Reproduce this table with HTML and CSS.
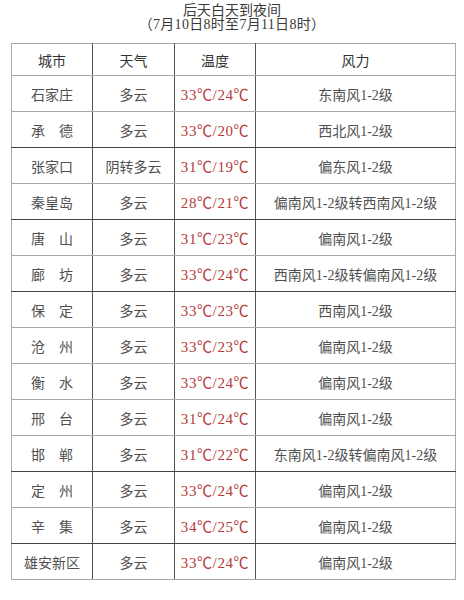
FILE: index.html
```html
<!DOCTYPE html>
<html lang="zh">
<head>
<meta charset="utf-8">
<link rel="stylesheet" href="styles.css">
</head>
<body>
<div class="title">
  <div>后天白天到夜间</div>
  <div class="sub">（7月10日8时至7月11日8时）</div>
</div>
<table class="wx">
  <colgroup><col class="c1"><col class="c2"><col class="c3"><col class="c4"></colgroup>
  <tr class="head"><th>城市</th><th>天气</th><th>温度</th><th>风力</th></tr>
  <tr><td>石家庄</td><td>多云</td><td class="t">33℃/24℃</td><td>东南风1-2级</td></tr>
  <tr class="dk"><td>承　德</td><td>多云</td><td class="t">33℃/20℃</td><td>西北风1-2级</td></tr>
  <tr><td>张家口</td><td>阴转多云</td><td class="t">31℃/19℃</td><td>偏东风1-2级</td></tr>
  <tr class="dk"><td>秦皇岛</td><td>多云</td><td class="t">28℃/21℃</td><td>偏南风1-2级转西南风1-2级</td></tr>
  <tr><td>唐　山</td><td>多云</td><td class="t">31℃/23℃</td><td>偏南风1-2级</td></tr>
  <tr class="dk"><td>廊　坊</td><td>多云</td><td class="t">33℃/24℃</td><td>西南风1-2级转偏南风1-2级</td></tr>
  <tr><td>保　定</td><td>多云</td><td class="t">33℃/23℃</td><td>西南风1-2级</td></tr>
  <tr><td>沧　州</td><td>多云</td><td class="t">33℃/23℃</td><td>偏南风1-2级</td></tr>
  <tr><td>衡　水</td><td>多云</td><td class="t">33℃/24℃</td><td>偏南风1-2级</td></tr>
  <tr><td>邢　台</td><td>多云</td><td class="t">31℃/24℃</td><td>偏南风1-2级</td></tr>
  <tr class="dk"><td>邯　郸</td><td>多云</td><td class="t">31℃/22℃</td><td>东南风1-2级转偏南风1-2级</td></tr>
  <tr><td>定　州</td><td>多云</td><td class="t">33℃/24℃</td><td>偏南风1-2级</td></tr>
  <tr class="dk"><td>辛　集</td><td>多云</td><td class="t">34℃/25℃</td><td>偏南风1-2级</td></tr>
  <tr><td>雄安新区</td><td>多云</td><td class="t">33℃/24℃</td><td>偏南风1-2级</td></tr>
</table>
</body>
</html>
```

FILE: styles.css
```css
html, body {
  margin: 0;
  padding: 0;
  background: #ffffff;
}
body {
  font-family: "Liberation Serif", "Noto Sans CJK SC", serif;
  color: #505050;
}
.title {
  padding-top: 4px;
  text-align: center;
  font-size: 14px;
  line-height: 14px;
  color: #3a3a3a;
}
.title .sub {
  font-size: 14px;
  letter-spacing: 0.3px;
}
.wx {
  margin: 11px 0 0 11px;
  width: 444px;
  border-collapse: collapse;
  table-layout: fixed;
  border: 1px solid #aaaaaa;
}
.c1 { width: 81px; }
.c2 { width: 82px; }
.c3 { width: 81px; }
.c4 { width: 200px; }
.wx th, .wx td {
  padding: 0;
  text-align: center;
  vertical-align: middle;
  font-size: 14px;
  font-weight: normal;
  height: 35px;
  border-top: 1px solid #a8a8a8;
  border-bottom: 1px solid #a8a8a8;
  border-left: 1px solid #555555;
  border-right: 1px solid #555555;
}
.wx th:first-child, .wx td:first-child { border-left-color: #aaaaaa; }
.wx th:last-child, .wx td:last-child { border-right-color: #aaaaaa; }
.wx .head th {
  height: 31px;
  color: #333333;
  font-size: 14px;
}
.wx tr.dk td { border-bottom: 1px solid #444444; }
.wx td.t {
  color: #b5393a;
  font-size: 15px;
  letter-spacing: 0.6px;
}
```
